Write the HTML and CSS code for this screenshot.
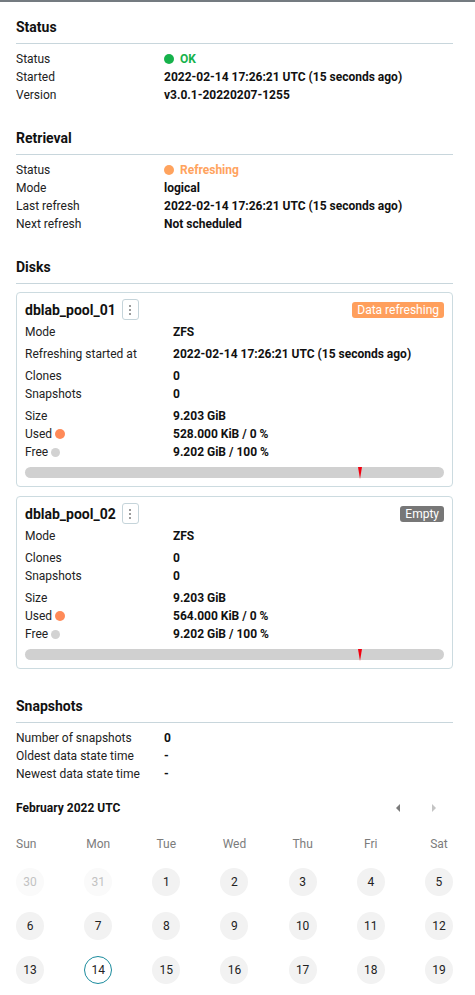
FILE: index.html
```html
<!DOCTYPE html>
<html lang="en">
<head>
<meta charset="utf-8">
<title>Instance info</title>
<link rel="stylesheet" href="styles.css">
</head>
<body>
<div class="topline"></div>
<main class="page">
  <section class="section first">
    <h2 class="heading">Status</h2>
    <div class="row"><span class="label">Status</span><span class="value status ok"><span class="dot"></span>OK</span></div>
    <div class="row"><span class="label">Started</span><span class="value">2022-02-14 17:26:21 UTC (15 seconds ago)</span></div>
    <div class="row"><span class="label">Version</span><span class="value">v3.0.1-20220207-1255</span></div>
  </section>

  <section class="section">
    <h2 class="heading">Retrieval</h2>
    <div class="row"><span class="label">Status</span><span class="value status warn"><span class="dot"></span>Refreshing</span></div>
    <div class="row"><span class="label">Mode</span><span class="value">logical</span></div>
    <div class="row"><span class="label">Last refresh</span><span class="value">2022-02-14 17:26:21 UTC (15 seconds ago)</span></div>
    <div class="row"><span class="label">Next refresh</span><span class="value">Not scheduled</span></div>
  </section>

  <section class="section">
    <h2 class="heading">Disks</h2>
    <div class="disks">
      <div class="card">
        <div class="card-head">
          <span class="card-title">dblab_pool_01</span>
          <button class="kebab" type="button" aria-label="Menu"><span></span><span></span><span></span></button>
          <span class="badge badge-orange">Data refreshing</span>
        </div>
        <div class="group">
          <div class="row"><span class="label">Mode</span><span class="value">ZFS</span></div>
        </div>
        <div class="group">
          <div class="row"><span class="label">Refreshing started at</span><span class="value">2022-02-14 17:26:21 UTC (15 seconds ago)</span></div>
        </div>
        <div class="group">
          <div class="row"><span class="label">Clones</span><span class="value">0</span></div>
          <div class="row"><span class="label">Snapshots</span><span class="value">0</span></div>
        </div>
        <div class="group">
          <div class="row"><span class="label">Size</span><span class="value">9.203 GiB</span></div>
          <div class="row"><span class="label">Used <span class="mini used"></span></span><span class="value">528.000 KiB / 0 %</span></div>
          <div class="row"><span class="label">Free <span class="mini free"></span></span><span class="value">9.202 GiB / 100 %</span></div>
        </div>
        <div class="bar"><span class="marker" style="left: 80%"></span></div>
      </div>

      <div class="card">
        <div class="card-head">
          <span class="card-title">dblab_pool_02</span>
          <button class="kebab" type="button" aria-label="Menu"><span></span><span></span><span></span></button>
          <span class="badge badge-gray">Empty</span>
        </div>
        <div class="group">
          <div class="row"><span class="label">Mode</span><span class="value">ZFS</span></div>
        </div>
        <div class="group">
          <div class="row"><span class="label">Clones</span><span class="value">0</span></div>
          <div class="row"><span class="label">Snapshots</span><span class="value">0</span></div>
        </div>
        <div class="group">
          <div class="row"><span class="label">Size</span><span class="value">9.203 GiB</span></div>
          <div class="row"><span class="label">Used <span class="mini used"></span></span><span class="value">564.000 KiB / 0 %</span></div>
          <div class="row"><span class="label">Free <span class="mini free"></span></span><span class="value">9.202 GiB / 100 %</span></div>
        </div>
        <div class="bar"><span class="marker" style="left: 80%"></span></div>
      </div>
    </div>
  </section>

  <section class="section">
    <h2 class="heading">Snapshots</h2>
    <div class="row"><span class="label">Number of snapshots</span><span class="value">0</span></div>
    <div class="row"><span class="label">Oldest data state time</span><span class="value">-</span></div>
    <div class="row"><span class="label">Newest data state time</span><span class="value">-</span></div>

    <div class="calendar">
      <div class="cal-head">
        <span class="cal-title">February 2022 UTC</span>
        <div class="cal-nav">
          <span class="arrow prev"></span>
          <span class="arrow next"></span>
        </div>
      </div>
      <div class="cal-grid weekdays">
        <span>Sun</span><span>Mon</span><span>Tue</span><span>Wed</span><span>Thu</span><span>Fri</span><span>Sat</span>
      </div>
      <div class="cal-grid days">
        <span class="day out">30</span><span class="day out">31</span><span class="day">1</span><span class="day">2</span><span class="day">3</span><span class="day">4</span><span class="day">5</span>
        <span class="day">6</span><span class="day">7</span><span class="day">8</span><span class="day">9</span><span class="day">10</span><span class="day">11</span><span class="day">12</span>
        <span class="day">13</span><span class="day today">14</span><span class="day">15</span><span class="day">16</span><span class="day">17</span><span class="day">18</span><span class="day">19</span>
      </div>
    </div>
  </section>
</main>
</body>
</html>
```

FILE: styles.css
```css
* { box-sizing: border-box; }

html, body {
  margin: 0;
  padding: 0;
  background: #fff;
}

body {
  font-family: Roboto, "Liberation Sans", Arial, sans-serif;
  font-size: 12px;
  line-height: 18px;
  color: #1f1f1f;
}

.topline {
  height: 2px;
  background: #747b80;
}

.page {
  margin: 0 22px 0 16px;
}

.section { margin-top: 26px; }
.section.first { margin-top: 17px; }

.heading {
  margin: 0 0 6px;
  font-size: 14px;
  line-height: 16px;
  font-weight: 700;
  color: #111;
  padding-bottom: 8px;
  border-bottom: 1px solid #c8d6dc;
}

.row {
  display: flex;
  height: 18px;
  align-items: center;
  white-space: nowrap;
}

.label {
  flex: 0 0 148px;
  display: flex;
  align-items: center;
  color: #222;
}

.value {
  font-weight: 700;
  color: #111;
}

.status {
  display: flex;
  align-items: center;
}
.status .dot {
  width: 10px;
  height: 10px;
  border-radius: 50%;
  margin-right: 6px;
}
.status.ok { color: #16b24b; }
.status.ok .dot { background: #16b24b; }
.status.warn { color: #ffa35e; }
.status.warn .dot { background: #ffa35e; }

.disks {
  margin-top: 8px;
  padding-bottom: 3px;
  display: flex;
  flex-direction: column;
  gap: 9px;
}

.card {
  border: 1px solid #ccdbe0;
  border-radius: 4px;
  padding: 6px 8px 8px;
}

.card-head {
  display: flex;
  align-items: center;
  height: 21px;
  margin-bottom: 3px;
}

.card-title {
  font-size: 14px;
  font-weight: 700;
  color: #111;
  line-height: 16px;
}

.kebab {
  margin-left: 6px;
  width: 17px;
  height: 21px;
  padding: 0;
  border: 1px solid #c5d4da;
  border-radius: 3px;
  background: #fff;
  display: flex;
  flex-direction: column;
  align-items: center;
  justify-content: center;
  gap: 2px;
}
.kebab span {
  width: 2px;
  height: 2px;
  border-radius: 50%;
  background: #7a7a7a;
}

.badge {
  margin-left: auto;
  height: 16px;
  line-height: 16px;
  padding: 0 5px;
  border-radius: 3px;
  color: #fff;
  font-size: 12px;
}
.badge-orange { background: #ff9f5c; }
.badge-gray { background: #777; }

.group + .group { margin-top: 4px; }

.mini {
  display: inline-block;
  width: 10px;
  height: 10px;
  border-radius: 50%;
  margin-left: 3px;
}
.mini.used { background: #ff8a58; }
.mini.free { background: #d2d2d2; width: 9px; height: 9px; }

.bar {
  position: relative;
  margin-top: 6px;
  height: 11px;
  border-radius: 6px;
  background: #d0d0d0;
}
.marker {
  position: absolute;
  top: 0;
  width: 0;
  height: 0;
  margin-left: -2px;
  border-left: 2px solid transparent;
  border-right: 2px solid transparent;
  border-top: 12px solid #f2000f;
}

.calendar { margin-top: 17px; }

.cal-head {
  display: flex;
  align-items: center;
  justify-content: space-between;
  height: 16px;
}
.cal-title {
  font-weight: 700;
  color: #111;
  font-size: 12px;
}
.cal-nav {
  display: flex;
  align-items: center;
  gap: 32px;
  margin-right: 17px;
}
.arrow {
  width: 0;
  height: 0;
  border-top: 4px solid transparent;
  border-bottom: 4px solid transparent;
}
.arrow.prev { border-right: 4px solid #7b7b7b; }
.arrow.next { border-left: 4px solid #c4c4c4; }

.cal-grid {
  display: grid;
  grid-template-columns: repeat(7, 28px);
  justify-content: space-between;
}

.weekdays {
  margin-top: 19px;
  color: #7c7c7c;
  line-height: 18px;
}
.weekdays span {
  white-space: nowrap;
  display: flex;
  justify-content: center;
}
.weekdays span:first-child { justify-content: flex-start; }

.days {
  margin-top: 15px;
  row-gap: 16px;
}
.day {
  width: 28px;
  height: 28px;
  border-radius: 50%;
  background: #f2f2f2;
  color: #222;
  display: flex;
  align-items: center;
  justify-content: center;
  font-size: 12px;
}
.day.out {
  background: #fafafa;
  color: #c2c2c2;
}
.day.today {
  background: #fff;
  border: 1px solid #1a8b9d;
}
```
